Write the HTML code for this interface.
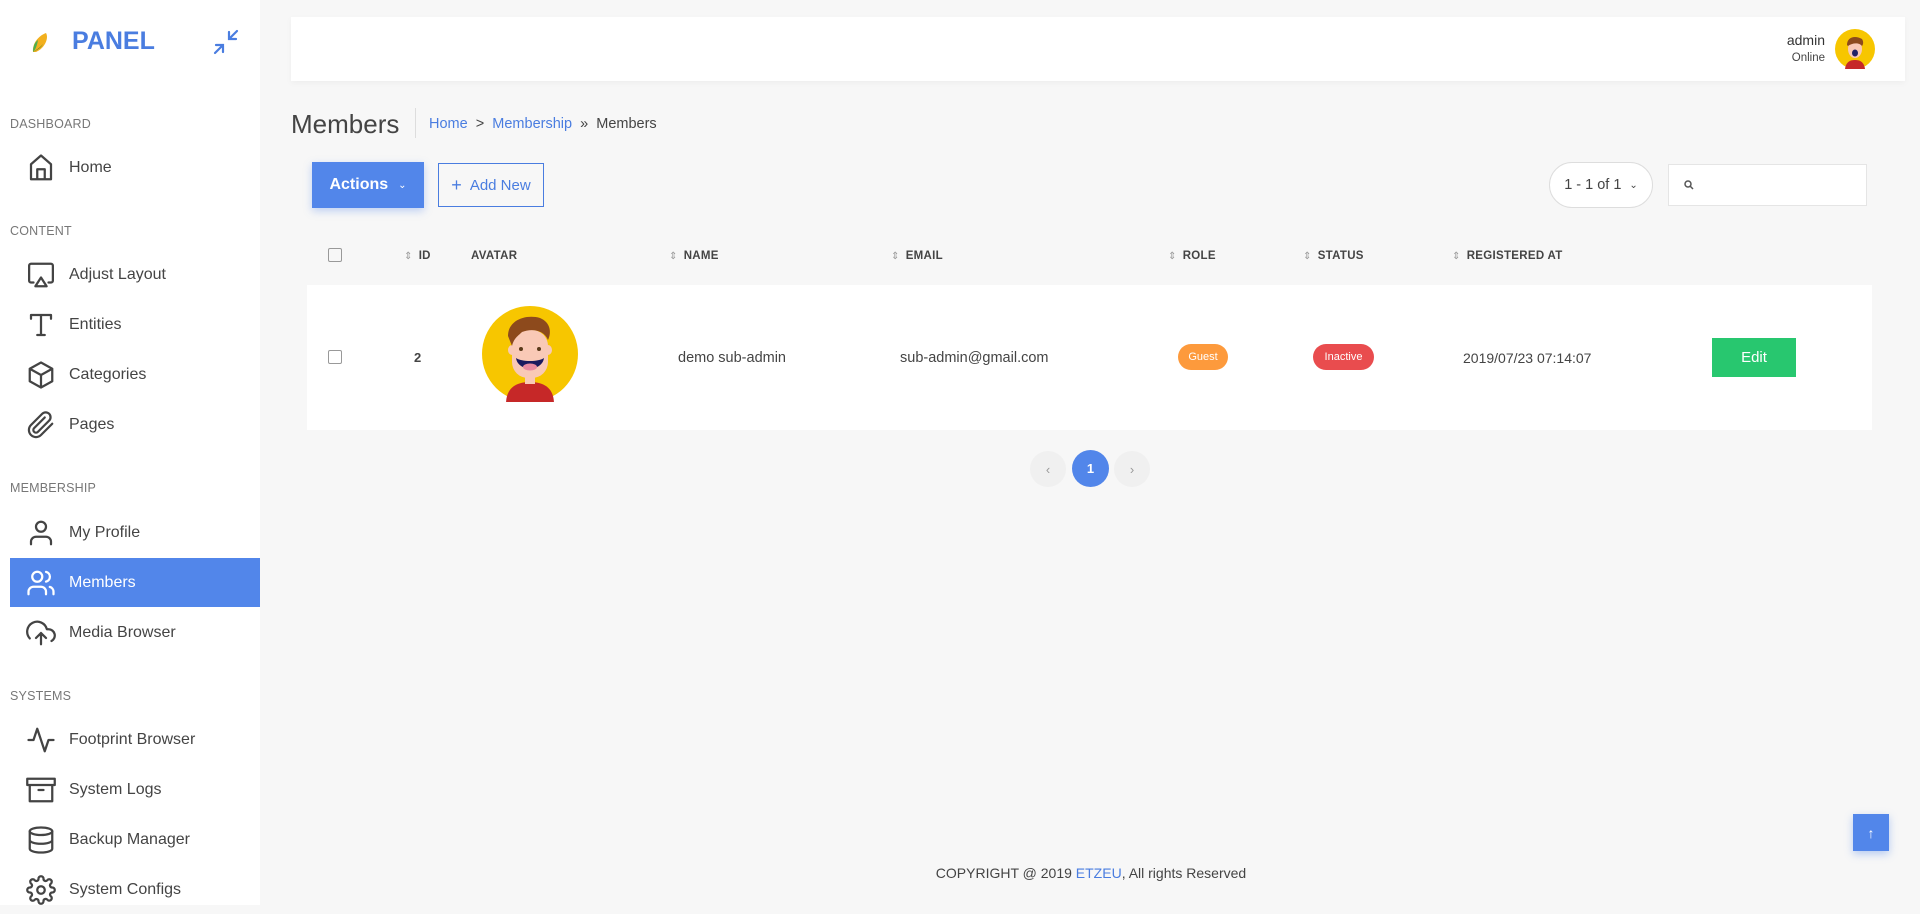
<!DOCTYPE html>
<html><head><meta charset="utf-8"><style>
*{box-sizing:border-box;margin:0;padding:0}
html,body{background:#f7f7f7}
body{width:1920px;height:905px;overflow:hidden;font-family:"Liberation Sans",sans-serif;color:#444;position:relative}
.a{position:absolute}
.side{left:0;top:0;width:260px;height:905px;background:#fff}
.sec{position:absolute;left:10px;font-size:12.5px;color:#777;letter-spacing:.2px}
.it{position:absolute;left:10px;width:250px;height:49px;display:flex;align-items:center;font-size:16px;color:#444}
.it svg{position:absolute;left:16px;width:30px;height:30px;fill:none;stroke:#444;stroke-width:1.8;stroke-linecap:round;stroke-linejoin:round}
.it span{position:absolute;left:59px;top:16px}
.it.on{background:#5286ea;color:#fff}
.it.on svg{stroke:#fff}
.th{position:absolute;top:250px;font-size:11.5px;font-weight:bold;color:#444;letter-spacing:.3px}
.ar{color:#999;font-weight:normal;font-size:10px;margin-right:6px}
.td{position:absolute;font-size:14.5px;color:#444}
</style></head><body>
<div class="a side">
  <svg class="a" style="left:30px;top:30px" width="22" height="24" viewBox="0 0 22 24"><path d="M3 22 C2 14 8 6 16 3 C19 8 15 18 6 22Z" fill="#f2b01e"/><path d="M3 22 C3 16 5 12 8 10 C7 15 6 19 3 22Z" fill="#4caf50"/><path d="M3 22 C7 20 11 18 13 14 C10 18 6 20 3 22Z" fill="#2e7d32"/></svg>
  <div class="a" style="left:72px;top:27px;font-size:25px;font-weight:bold;color:#4a7de0">PANEL</div>
  <svg class="a" style="left:212px;top:28px" width="28" height="28" viewBox="0 0 28 28" fill="none" stroke="#4a7de0" stroke-width="2.2" stroke-linecap="round"><path d="M25 3 L17 11 M17 4 V11 H24 M3 25 L11 17 M4 17 H11 V24"/></svg>
  <div class="sec" style="top:117px">DASHBOARD</div>
  <div class="it" style="top:143px"><svg viewBox="0 0 24 24"><path d="M4 21 V9 L12 2 L20 9 V21 Z M9 21 V13 H15 V21"/></svg><span>Home</span></div>
  <div class="sec" style="top:224px">CONTENT</div>
  <div class="it" style="top:250px"><svg viewBox="0 0 24 24"><path d="M6 18 H4 A1.5 1.5 0 0 1 2.5 16.5 V4.5 A1.5 1.5 0 0 1 4 3 H20 A1.5 1.5 0 0 1 21.5 4.5 V16.5 A1.5 1.5 0 0 1 20 18 H18 M12 14 L16.5 21 H7.5 Z"/></svg><span>Adjust Layout</span></div>
  <div class="it" style="top:300px"><svg viewBox="0 0 24 24"><path d="M4 7 V4 H20 V7 M12 4 V20 M9 20 H15"/></svg><span>Entities</span></div>
  <div class="it" style="top:350px"><svg viewBox="0 0 24 24"><path d="M12 2 L21 7 V17 L12 22 L3 17 V7 Z M3 7 L12 12 L21 7 M12 12 V22"/></svg><span>Categories</span></div>
  <div class="it" style="top:400px"><svg viewBox="0 0 24 24"><path d="M21 11 L12 20 A5.5 5.5 0 0 1 4 12 L13 3 A3.7 3.7 0 0 1 18.5 8.5 L9.5 17.5 A1.8 1.8 0 0 1 6.5 14.5 L15 6"/></svg><span>Pages</span></div>
  <div class="sec" style="top:481px">MEMBERSHIP</div>
  <div class="it" style="top:508px"><svg viewBox="0 0 24 24"><circle cx="12" cy="7" r="4"/><path d="M4 21 V19 A4 4 0 0 1 8 15 H16 A4 4 0 0 1 20 19 V21"/></svg><span>My Profile</span></div>
  <div class="it on" style="top:558px"><svg viewBox="0 0 24 24"><circle cx="9" cy="7" r="4"/><path d="M2 21 V19 A4 4 0 0 1 6 15 H12 A4 4 0 0 1 16 19 V21 M16 3.1 A4 4 0 0 1 16 10.9 M22 21 V19 A4 4 0 0 0 19 15.1"/></svg><span>Members</span></div>
  <div class="it" style="top:608px"><svg viewBox="0 0 24 24"><path d="M16 16 L12 12 L8 16 M12 12 V21 M20.4 18.4 A5 5 0 0 0 18 9 H16.7 A8 8 0 1 0 3 16.3"/></svg><span>Media Browser</span></div>
  <div class="sec" style="top:689px">SYSTEMS</div>
  <div class="it" style="top:715px"><svg viewBox="0 0 24 24"><path d="M22 12 H18 L15 21 L9 3 L6 12 H2"/></svg><span>Footprint Browser</span></div>
  <div class="it" style="top:765px"><svg viewBox="0 0 24 24"><path d="M21 8 V21 H3 V8 M1 3 H23 V8 H1 Z M10 12 H14"/></svg><span>System Logs</span></div>
  <div class="it" style="top:815px"><svg viewBox="0 0 24 24"><ellipse cx="12" cy="5" rx="9" ry="3"/><path d="M21 12 C21 13.7 17 15 12 15 C7 15 3 13.7 3 12 M3 5 V19 C3 20.7 7 22 12 22 C17 22 21 20.7 21 19 V5"/></svg><span>Backup Manager</span></div>
  <div class="it" style="top:865px"><svg viewBox="0 0 24 24"><circle cx="12" cy="12" r="3"/><path d="M19.4 15 A1.7 1.7 0 0 0 19.7 16.8 L19.8 16.9 A2 2 0 1 1 17 19.7 L16.9 19.6 A1.7 1.7 0 0 0 14 20.8 V21 A2 2 0 0 1 10 21 V20.9 A1.7 1.7 0 0 0 7.1 19.7 L7 19.8 A2 2 0 1 1 4.2 17 L4.3 16.9 A1.7 1.7 0 0 0 3.1 14 H3 A2 2 0 0 1 3 10 H3.1 A1.7 1.7 0 0 0 4.3 7.1 L4.2 7 A2 2 0 1 1 7 4.2 L7.1 4.3 A1.7 1.7 0 0 0 10 3.1 V3 A2 2 0 0 1 14 3 V3.1 A1.7 1.7 0 0 0 16.9 4.3 L17 4.2 A2 2 0 1 1 19.8 7 L19.7 7.1 A1.7 1.7 0 0 0 20.9 10 H21 A2 2 0 0 1 21 14 H20.9 A1.7 1.7 0 0 0 19.4 15 Z"/></svg><span>System Configs</span></div>
</div>

<div class="a" style="left:291px;top:17px;width:1614px;height:64px;background:#fff;box-shadow:0 2px 6px rgba(0,0,0,.04)"></div>
<div class="a" style="left:1760px;top:32px;width:65px;text-align:right;font-size:14px;color:#333">admin</div>
<div class="a" style="left:1760px;top:52px;width:65px;text-align:right;font-size:11.5px;color:#444">Online</div>
<svg class="a" style="left:1835px;top:29px" width="40" height="40" viewBox="0 0 40 40"><circle cx="20" cy="20" r="20" fill="#f7c600"/><path d="M10 40 C11 33 15 31 20 31 C25 31 29 33 30 40Z" fill="#c62828"/><ellipse cx="20" cy="20" rx="7" ry="9" fill="#f9c9b6"/><path d="M12 16 C12 8 20 6 27 10 C29 13 28 16 27 17 C24 13 17 14 13 17Z" fill="#8d4a1c"/><ellipse cx="20" cy="24" rx="3" ry="3.5" fill="#222266"/></svg>

<div class="a" style="left:291px;top:109px;font-size:26px;color:#444">Members</div>
<div class="a" style="left:415px;top:108px;width:1px;height:30px;background:#ddd"></div>
<div class="a" style="left:429px;top:116px;font-size:14.5px;color:#444"><span style="color:#4a7de0">Home</span> &nbsp;&gt;&nbsp; <span style="color:#4a7de0">Membership</span> &nbsp;»&nbsp; Members</div>

<div class="a" style="left:312px;top:162px;width:112px;height:46px;background:#5286ea;color:#fff;font-size:16px;font-weight:bold;display:flex;align-items:center;justify-content:center;box-shadow:0 3px 8px rgba(82,134,234,.35)">Actions <span style="font-size:10px;margin-left:10px;font-weight:normal">&#8964;</span></div>
<div class="a" style="left:438px;top:163px;width:106px;height:44px;border:1px solid #4a7de0;color:#4a7de0;font-size:15px;display:flex;align-items:center;justify-content:center"><span style="font-size:18px;margin-right:8px;font-weight:300">+</span>Add New</div>
<div class="a" style="left:1549px;top:162px;width:104px;height:46px;border:1px solid #ddd;border-radius:23px;background:#fff;font-size:14.5px;color:#444;display:flex;align-items:center;justify-content:center">1 - 1 of 1 <span style="font-size:10px;margin-left:8px">&#8964;</span></div>
<div class="a" style="left:1668px;top:164px;width:199px;height:42px;border:1px solid #e5e5e5;background:#fff"></div>
<svg class="a" style="left:1684px;top:180px" width="10" height="10" viewBox="0 0 10 10" fill="none" stroke="#555" stroke-width="1.5"><circle cx="4" cy="4" r="3"/><path d="M6 6 L9 9"/></svg>

<div class="a" style="left:328px;top:248px;width:14px;height:14px;border:1.5px solid #999;border-radius:2px"></div>
<div class="th" style="left:404px"><span class="ar">&#8661;</span>ID</div>
<div class="th" style="left:471px">AVATAR</div>
<div class="th" style="left:669px"><span class="ar">&#8661;</span>NAME</div>
<div class="th" style="left:891px"><span class="ar">&#8661;</span>EMAIL</div>
<div class="th" style="left:1168px"><span class="ar">&#8661;</span>ROLE</div>
<div class="th" style="left:1303px"><span class="ar">&#8661;</span>STATUS</div>
<div class="th" style="left:1452px"><span class="ar">&#8661;</span>REGISTERED AT</div>

<div class="a" style="left:307px;top:285px;width:1565px;height:145px;background:#fff"></div>
<div class="a" style="left:328px;top:350px;width:14px;height:14px;border:1.5px solid #999;border-radius:2px"></div>
<div class="td" style="left:414px;top:350px;font-size:13px;font-weight:bold">2</div>
<svg class="a" style="left:482px;top:306px" width="96" height="96" viewBox="0 0 96 96"><circle cx="48" cy="48" r="48" fill="#f7c600"/><path d="M24 98 C24 82 34 76 48 76 C62 76 72 82 72 98Z" fill="#c62828"/><rect x="43" y="66" width="10" height="12" fill="#f9c9b6"/><ellipse cx="30" cy="44" rx="4" ry="5" fill="#f9c9b6"/><ellipse cx="66" cy="44" rx="4" ry="5" fill="#f9c9b6"/><rect x="30" y="24" width="36" height="48" rx="16" fill="#f9c9b6"/><path d="M26 30 C26 14 44 8 58 12 C68 16 70 26 66 34 C62 24 50 22 40 26 C36 30 32 32 30 40Z" fill="#8d4a1c"/><circle cx="39" cy="43" r="2" fill="#5a3a1a"/><circle cx="57" cy="43" r="2" fill="#5a3a1a"/><path d="M34 52 C40 56 56 56 62 52 C60 66 36 66 34 52Z" fill="#1a1a5e"/><ellipse cx="48" cy="61" rx="7" ry="3.5" fill="#e88aa0"/></svg>
<div class="td" style="left:678px;top:350px">demo sub-admin</div>
<div class="td" style="left:900px;top:350px">sub-admin@gmail.com</div>
<div class="a" style="left:1178px;top:344px;width:50px;height:26px;border-radius:13px;background:#fd9a3c;color:#fff;font-size:11px;display:flex;align-items:center;justify-content:center">Guest</div>
<div class="a" style="left:1313px;top:344px;width:61px;height:26px;border-radius:13px;background:#e94c4e;color:#fff;font-size:11px;display:flex;align-items:center;justify-content:center">Inactive</div>
<div class="td" style="left:1463px;top:350px;font-size:14px">2019/07/23 07:14:07</div>
<div class="a" style="left:1712px;top:338px;width:84px;height:39px;background:#28c76f;color:#fff;font-size:15px;display:flex;align-items:center;justify-content:center">Edit</div>

<div class="a" style="left:1030px;top:451px;width:36px;height:36px;border-radius:50%;background:#f0f0f0;color:#999;font-size:13px;display:flex;align-items:center;justify-content:center">&#8249;</div>
<div class="a" style="left:1072px;top:450px;width:37px;height:37px;border-radius:50%;background:#5286ea;color:#fff;font-size:13px;font-weight:bold;display:flex;align-items:center;justify-content:center">1</div>
<div class="a" style="left:1114px;top:451px;width:36px;height:36px;border-radius:50%;background:#f0f0f0;color:#999;font-size:13px;display:flex;align-items:center;justify-content:center">&#8250;</div>

<div class="a" style="left:291px;top:865px;width:1600px;text-align:center;font-size:14px;color:#444">COPYRIGHT @ 2019 <span style="color:#4a7de0">ETZEU</span>, All rights Reserved</div>
<div class="a" style="left:1853px;top:814px;width:36px;height:37px;background:#5286ea;color:#fff;font-size:14px;display:flex;align-items:center;justify-content:center;box-shadow:0 3px 8px rgba(82,134,234,.4)">&#8593;</div>
</body></html>
